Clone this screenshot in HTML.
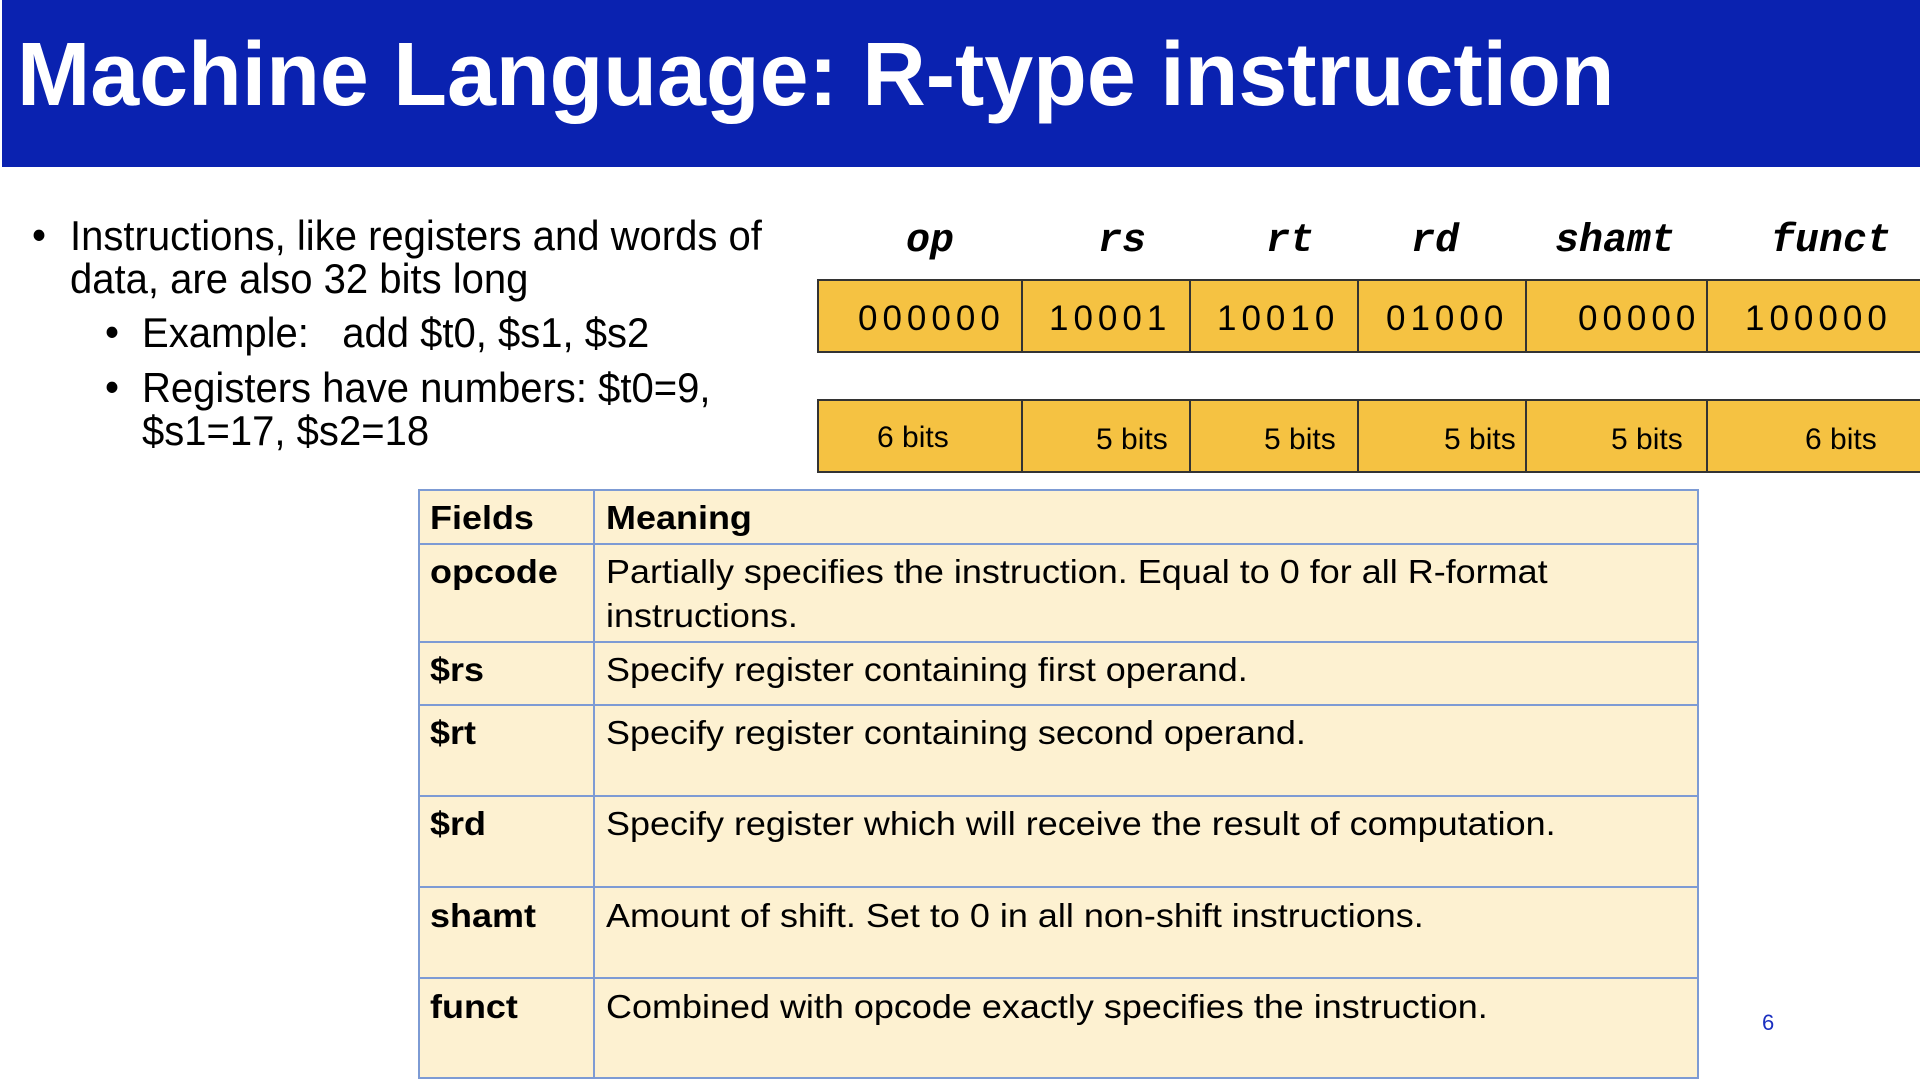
<!DOCTYPE html>
<html><head><meta charset="utf-8"><style>
*{margin:0;padding:0;box-sizing:border-box}
body{width:1920px;height:1070px;overflow:hidden;background:#fff;position:relative;font-family:"Liberation Sans",Arial,sans-serif;color:#000}
.hdr{position:absolute;left:0;top:0;width:1920px;height:167px;background:#0a22b0;border-left:2px solid #fff}
.title{position:absolute;left:17px;top:24px;font-size:90px;font-weight:bold;color:#fff;white-space:nowrap;transform-origin:0 0;transform:scaleX(0.977)}
.t{position:absolute;white-space:nowrap;line-height:1}
.b{font-size:42px;transform-origin:0 50%;transform:scaleX(0.953)}
.lbl{font-family:"Liberation Mono",monospace;font-weight:bold;font-style:italic;font-size:40px}
.dig{font-size:35px;letter-spacing:5px}
.bits{font-size:30px}
.box{position:absolute;background:#f5c242;border:2px solid #333}
.vl{position:absolute;width:2px;background:#333}
.tbl{position:absolute;left:418px;top:489px;width:1281px;height:590px;background:#fdf1d1;border:2px solid #7d9bd4}
.hl{position:absolute;left:418px;width:1281px;height:2px;background:#7d9bd4}
.tx{font-size:33px;transform-origin:0 50%;transform:scaleX(1.09)}
.bd{font-weight:bold}
</style></head><body>
<div class="hdr"></div>
<div class="title">Machine Language: R-type instruction</div>

<div class="t b" style="left:32px;top:214px">•</div>
<div class="t b" style="left:70px;top:215px">Instructions, like registers and words of</div>
<div class="t b" style="left:70px;top:258px">data, are also 32 bits long</div>
<div class="t b" style="left:105px;top:311px">•</div>
<div class="t b" style="left:142px;top:312px">Example:&nbsp;&nbsp; add $t0, $s1, $s2</div>
<div class="t b" style="left:105px;top:366px">•</div>
<div class="t b" style="left:142px;top:367px">Registers have numbers: $t0=9,</div>
<div class="t b" style="left:142px;top:410px">$s1=17, $s2=18</div>

<div class="t lbl" style="left:906px;top:222px">op</div>
<div class="t lbl" style="left:1098px;top:222px">rs</div>
<div class="t lbl" style="left:1266px;top:222px">rt</div>
<div class="t lbl" style="left:1411px;top:222px">rd</div>
<div class="t lbl" style="left:1555px;top:222px">shamt</div>
<div class="t lbl" style="left:1771px;top:222px">funct</div>

<div class="box" style="left:817px;top:279px;width:1110px;height:74px"></div>
<div class="box" style="left:817px;top:399px;width:1110px;height:74px"></div>
<div class="vl" style="left:1021px;top:279px;height:74px"></div>
<div class="vl" style="left:1189px;top:279px;height:74px"></div>
<div class="vl" style="left:1357px;top:279px;height:74px"></div>
<div class="vl" style="left:1525px;top:279px;height:74px"></div>
<div class="vl" style="left:1706px;top:279px;height:74px"></div>
<div class="vl" style="left:1021px;top:399px;height:74px"></div>
<div class="vl" style="left:1189px;top:399px;height:74px"></div>
<div class="vl" style="left:1357px;top:399px;height:74px"></div>
<div class="vl" style="left:1525px;top:399px;height:74px"></div>
<div class="vl" style="left:1706px;top:399px;height:74px"></div>

<div class="t dig" style="left:858px;top:301px">000000</div>
<div class="t dig" style="left:1049px;top:301px">10001</div>
<div class="t dig" style="left:1217px;top:301px">10010</div>
<div class="t dig" style="left:1386px;top:301px">01000</div>
<div class="t dig" style="left:1578px;top:301px">00000</div>
<div class="t dig" style="left:1745px;top:301px">100000</div>

<div class="t bits" style="left:877px;top:423px">6 bits</div>
<div class="t bits" style="left:1096px;top:425px">5 bits</div>
<div class="t bits" style="left:1264px;top:425px">5 bits</div>
<div class="t bits" style="left:1444px;top:425px">5 bits</div>
<div class="t bits" style="left:1611px;top:425px">5 bits</div>
<div class="t bits" style="left:1805px;top:425px">6 bits</div>

<div class="tbl"></div>
<div style="position:absolute;left:593px;top:489px;width:2px;height:590px;background:#7d9bd4"></div>
<div class="hl" style="top:543px"></div>
<div class="hl" style="top:641px"></div>
<div class="hl" style="top:704px"></div>
<div class="hl" style="top:795px"></div>
<div class="hl" style="top:886px"></div>
<div class="hl" style="top:977px"></div>

<div class="t tx bd" style="left:430px;top:501px">Fields</div>
<div class="t tx bd" style="left:606px;top:501px">Meaning</div>
<div class="t tx bd" style="left:430px;top:555px">opcode</div>
<div class="t tx" style="left:606px;top:555px">Partially specifies the instruction. Equal to 0 for all R-format</div>
<div class="t tx" style="left:606px;top:599px">instructions.</div>
<div class="t tx bd" style="left:430px;top:653px">$rs</div>
<div class="t tx" style="left:606px;top:653px">Specify register containing first operand.</div>
<div class="t tx bd" style="left:430px;top:716px">$rt</div>
<div class="t tx" style="left:606px;top:716px">Specify register containing second operand.</div>
<div class="t tx bd" style="left:430px;top:807px">$rd</div>
<div class="t tx" style="left:606px;top:807px">Specify register which will receive the result of computation.</div>
<div class="t tx bd" style="left:430px;top:899px">shamt</div>
<div class="t tx" style="left:606px;top:899px">Amount of shift. Set to 0 in all non-shift instructions.</div>
<div class="t tx bd" style="left:430px;top:990px">funct</div>
<div class="t tx" style="left:606px;top:990px">Combined with opcode exactly specifies the instruction.</div>

<div class="t" style="left:1762px;top:1012px;font-size:22px;color:#1a2fc0">6</div>
</body></html>
